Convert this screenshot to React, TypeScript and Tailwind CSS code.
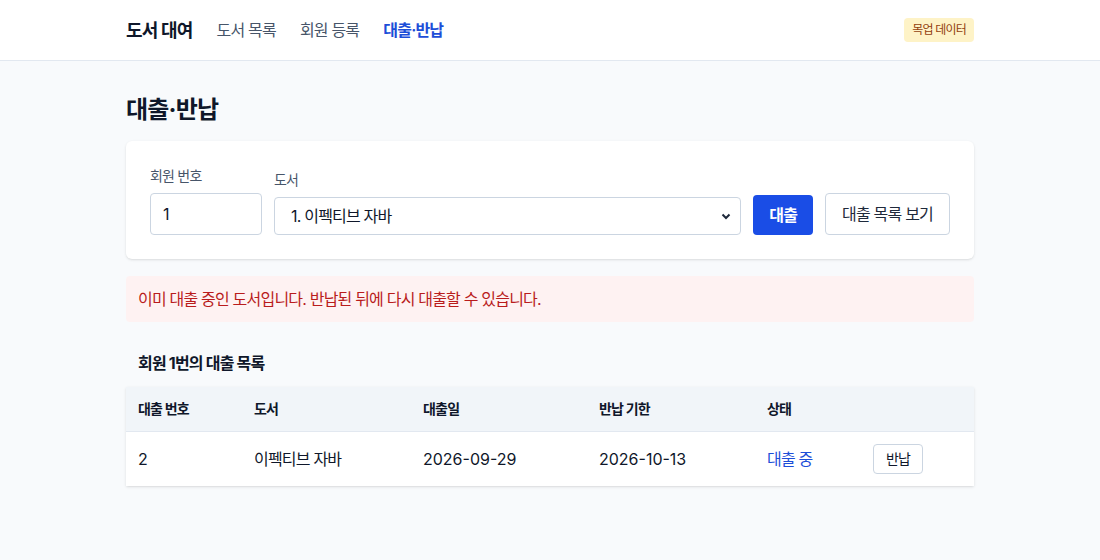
import React from "react";

export default function App() {
  return (
    <div
      className="min-h-[560px] bg-[#f8fafc] text-[#0f172a] tracking-[-0.05em]"
      style={{ fontFamily: "Inter, 'Noto Sans CJK KR', sans-serif" }}
    >
      <header className="h-[61px] bg-white border-b border-[#e2e8f0]">
        <div className="max-w-[848px] mx-auto h-full flex items-center">
          <div className="text-[18px] font-bold text-[#0f172a]">도서 대여</div>
          <nav className="flex items-center gap-6 ml-6 text-[16px]">
            <a className="text-[#475569]">도서 목록</a>
            <a className="text-[#475569]">회원 등록</a>
            <a className="text-[#1d4ed8] font-semibold">대출·반납</a>
          </nav>
          <span className="ml-auto bg-[#fef3c7] text-[#92400e] text-[12px] px-2 h-[24px] flex items-center rounded">
            목업 데이터
          </span>
        </div>
      </header>

      <main className="max-w-[848px] mx-auto">
        <h1 className="text-[24px] font-bold mt-[33px] mb-[15px] leading-[32px]">대출·반납</h1>

        <section className="bg-white rounded-md shadow-sm p-6 flex items-end gap-3">
          <label className="flex flex-col gap-[6px]">
            <span className="text-[14px] leading-[22px] text-[#475569]">회원 번호</span>
            <input
              defaultValue="1"
              className="w-[112px] h-[42px] px-3 border border-[#cbd5e1] rounded text-[16px] text-[#0f172a] tracking-normal"
            />
          </label>
          <label className="flex flex-col gap-[6px] flex-1">
            <span className="text-[14px] leading-[22px] text-[#475569]">도서</span>
            <div className="relative h-[38px] border border-[#cbd5e1] rounded flex items-center px-4 text-[16px]">
              1. 이펙티브 자바
              <svg
                className="absolute right-[8px] top-1/2 -translate-y-1/2"
                width="12"
                height="12"
                viewBox="0 0 12 12"
                fill="none"
                stroke="#1e293b"
                strokeWidth="2"
              >
                <path d="M2.5 4.5 L6 8 L9.5 4.5" />
              </svg>
            </div>
          </label>
          <button className="h-[40px] px-4 bg-[#1a4de6] text-white rounded text-[16px] font-semibold">
            대출
          </button>
          <button className="h-[42px] px-4 bg-white border border-[#cbd5e1] rounded text-[16px] text-[#1e293b]">
            대출 목록 보기
          </button>
        </section>

        <div className="mt-[17px] bg-[#fef2f2] rounded px-3 h-[46px] flex items-center text-[16px] text-[#b91c1c]">
          이미 대출 중인 도서입니다. 반납된 뒤에 다시 대출할 수 있습니다.
        </div>

        <h2 className="mt-[29px] px-3 text-[16px] font-bold leading-[24px]">회원 1번의 대출 목록</h2>

        <table className="mt-[12px] w-full bg-white shadow-sm border-collapse text-left">
          <thead>
            <tr className="bg-[#f1f5f9] border-b border-[#e2e8f0] h-[44px] text-[14px] font-bold">
              <th className="w-[116px] px-3 font-bold">대출 번호</th>
              <th className="w-[169px] px-3 font-bold">도서</th>
              <th className="w-[176px] px-3 font-bold">대출일</th>
              <th className="w-[168px] px-3 font-bold">반납 기한</th>
              <th className="w-[106px] px-3 font-bold">상태</th>
              <th className="px-3"></th>
            </tr>
          </thead>
          <tbody>
            <tr className="h-[55px] text-[16px]">
              <td className="px-3 tracking-normal">2</td>
              <td className="px-3">이펙티브 자바</td>
              <td className="px-3 tracking-normal">2026-09-29</td>
              <td className="px-3 tracking-normal">2026-10-13</td>
              <td className="px-3 text-[#1d4ed8]">대출 중</td>
              <td className="px-3">
                <button className="h-[30px] px-3 border border-[#cbd5e1] rounded text-[14px] bg-white">
                  반납
                </button>
              </td>
            </tr>
          </tbody>
        </table>
      </main>
    </div>
  );
}
